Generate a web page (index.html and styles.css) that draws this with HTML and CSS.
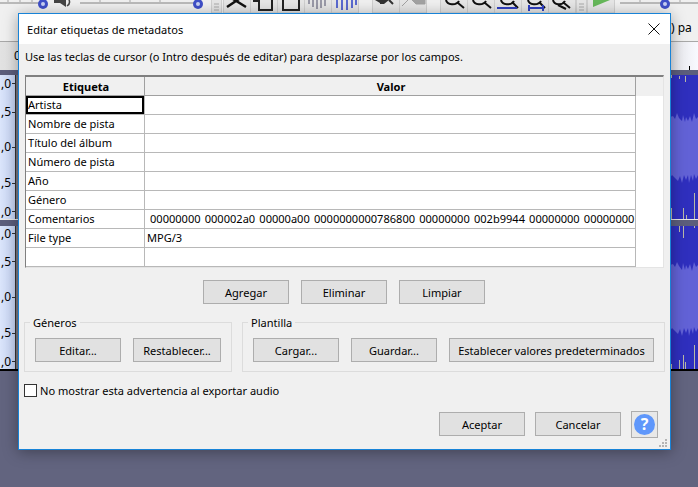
FILE: index.html
```html
<!DOCTYPE html>
<html lang="es">
<head>
  <meta charset="UTF-8" />
  <title>Editar etiquetas de metadatos</title>
  <link rel="stylesheet" href="styles.css">
</head>
<body>
  <!-- ventana de fondo -->
  <div class="app">
    <svg class="toolbar" width="698" height="14" viewBox="0 0 698 14">
      <rect width="698" height="14" fill="#f0f0f0"/>
      <path d="M0 3H43M80 3H198M620 3H698" stroke="#a8a8a8" stroke-width="1.5"/>
      <path d="M8 0V2M20 0V2M32 0V2M100 0V2M130 0V2M160 0V2M640 0V2M680 0V2" stroke="#a8a8a8"/>
      <g fill="#3f4fc8">
        <circle cx="43" cy="4" r="5"/><circle cx="198" cy="4" r="5"/><circle cx="665" cy="4" r="5"/>
      </g>
      <g fill="#c8d0f4">
        <circle cx="43" cy="4" r="2"/><circle cx="198" cy="4" r="2"/><circle cx="665" cy="4" r="2"/>
      </g>
      <path d="M54 0H66V7L60 3H54Z" fill="#444"/>
      <path d="M69 0C70 2 70 4 67 6" fill="none" stroke="#444" stroke-width="1.500"/>
      <g fill="#e6e6e6" stroke="#cfcfcf">
        <rect x="211.500" y="-2" width="10" height="15"/>
        <rect x="223.500" y="-2" width="27" height="15"/>
        <rect x="250.500" y="-2" width="27" height="15"/>
        <rect x="277.500" y="-2" width="27" height="15"/>
        <rect x="304.500" y="-2" width="27" height="15"/>
        <rect x="331.500" y="-2" width="27" height="15"/>
        <rect x="372.500" y="-2" width="27" height="15"/>
        <rect x="399.500" y="-2" width="27" height="15"/>
        <rect x="440.500" y="-2" width="27" height="15"/>
        <rect x="467.500" y="-2" width="27" height="15"/>
        <rect x="494.500" y="-2" width="27" height="15"/>
        <rect x="521.500" y="-2" width="27" height="15"/>
        <rect x="548.500" y="-2" width="27" height="15"/>
        <rect x="576.500" y="-2" width="10" height="15"/>
        <rect x="587.500" y="-2" width="27" height="15"/>
      </g>
      <path d="M214 4H219M214 7H219M214 10H219M579 4H584M579 7H584M579 10H584" stroke="#aaa"/>
      <path d="M233 -1L246 7M227 7L239 -1" fill="none" stroke="#111" stroke-width="2.500"/>
      <path d="M253 1H258M259 0V10H272V0M283 0V10H299V0" fill="none" stroke="#222" stroke-width="2"/>
      <path d="M309 0V4M313 0V7M317 0V9M321 0V8M325 0V6" stroke="#9a9aa8" stroke-width="2"/>
      <path d="M337 0V8M342 0V10M347 0V10M352 0V8M356 0V5" stroke="#5a6ad0" stroke-width="2"/>
      <path d="M375 0H389L384 4H380V3Z" fill="#333"/>
      <path d="M389 0L393 4" stroke="#333" stroke-width="2"/>
      <path d="M402 6L408 0M412 0H425V4H416Z" fill="#a2a2a2" stroke="#a2a2a2"/>
      <g fill="none" stroke="#111" stroke-width="2">
        <path d="M446 0C447 5 456 6 459 1M458 3L464 8"/>
        <path d="M473 0C474 5 483 6 486 1M485 3L491 8"/>
        <path d="M501 0C502 5 511 6 514 1M513 3L518 8"/>
        <path d="M528 0C529 5 538 6 541 1M540 3L545 8"/>
        <path d="M553 0C554 5 562 6 565 1M564 3L570 8M558 5L566 9"/>
      </g>
      <path d="M497 8H517M529 8H543M529 5V11M543 5V11" stroke="#3040c0" stroke-width="2"/>
      <path d="M593 0H610L593 7Z" fill="#66b85a"/>
    </svg>
    <div class="rate-row"><span class="rate">) pa</span></div>
    <div class="ruler">
      <span class="ruler-zero">0</span>
      <span class="ruler-tick"></span>
    </div>
    <div class="track">
      <div class="scale">
        <span>,0</span><span>,5</span><span>,0</span><span>,5</span><span>,0</span>
      </div>
      <div class="track-sep"></div>
      <div class="track-mid"></div>
      <svg class="wave" width="28" height="144" viewBox="0 0 28 144">
        <rect width="28" height="144" fill="#2f2fbe"/>
        <path d="M0 42L3 41L5 44L7 38L9 43L12 46L13 40L15 47L16 42L18 46L20 41L22 47L24 38L26 44L28 42V100L26 104L24 99L23 106L21 100L19 108L18 100L16 105L14 100L12 108L10 101L8 106L6 104L4 102L2 100L0 103Z" fill="#6262d6"/>
        <path d="M1.500 0V3M9.500 1V4M15.500 1V7M1.500 133V144M13.500 133V144M16.500 140V144M24.500 118V144" stroke="#b9b9a6"/>
      </svg>
    </div>
    <div class="track-gap"></div>
    <div class="track track-low">
      <div class="scale">
        <span>,0</span><span>,5</span><span>,0</span><span>,5</span><span>,0</span>
      </div>
      <div class="track-sep"></div>
      <div class="track-mid"></div>
      <svg class="wave" width="28" height="143" viewBox="0 0 28 143">
        <rect width="28" height="143" fill="#2f2fbe"/>
        <path d="M0 39L3 38L5 41L7 36L9 40L12 44L13 37L15 44L16 39L18 43L20 38L22 45L24 36L26 41L28 39V102L26 106L24 101L23 108L21 102L19 110L18 102L16 107L14 102L12 110L10 103L8 108L6 106L4 104L2 102L0 105Z" fill="#6262d6"/>
        <path d="M9.500 0V6M13.500 0V12M24.500 0V2M1.500 138V143M9.500 134V143M13.500 129V143M15.500 136V143M24.500 119V143" stroke="#b9b9a6"/>
      </svg>
    </div>
    <div class="track-end"></div>
  </div>

  <div class="dialog">
    <div class="title-bar">
      <span>Editar etiquetas de metadatos</span>
      <svg class="close-icon" width="12" height="12" viewBox="0 0 12 12">
        <path d="M0.500 0.500L11.500 11.500M11.500 0.500L0.500 11.500" stroke="#111" fill="none"/>
      </svg>
    </div>
    <p class="hint">Use las teclas de cursor (o Intro después de editar) para desplazarse por los campos.</p>

    <div class="grid-panel">
      <table class="tags">
        <thead>
          <tr><th class="col-tag">Etiqueta</th><th class="col-value">Valor</th></tr>
        </thead>
        <tbody>
          <tr><td class="selected">Artista</td><td></td></tr>
          <tr><td>Nombre de pista</td><td></td></tr>
          <tr><td>Título del álbum</td><td></td></tr>
          <tr><td>Número de pista</td><td></td></tr>
          <tr><td>Año</td><td></td></tr>
          <tr><td>Género</td><td></td></tr>
          <tr><td>Comentarios</td><td class="long">00000000 000002a0 00000a00 0000000000786800 00000000 002b9944 00000000 00000000 00000000</td></tr>
          <tr><td>File type</td><td>MPG/3</td></tr>
          <tr><td></td><td></td></tr>
        </tbody>
      </table>
    </div>

    <div class="row-actions">
      <button>Agregar</button>
      <button>Eliminar</button>
      <button>Limpiar</button>
    </div>

    <div class="groups">
      <fieldset class="group group-genres">
        <legend>Géneros</legend>
        <button>Editar...</button>
        <button class="btn-reset">Restablecer...</button>
      </fieldset>
      <fieldset class="group group-template">
        <legend>Plantilla</legend>
        <button>Cargar...</button>
        <button>Guardar...</button>
        <button class="btn-defaults">Establecer valores predeterminados</button>
      </fieldset>
    </div>

    <label class="check-row">
      <input type="checkbox" />
      <span>No mostrar esta advertencia al exportar audio</span>
    </label>

    <div class="footer">
      <button>Aceptar</button>
      <button>Cancelar</button>
      <button class="btn-help"><span class="help-dot">?</span></button>
    </div>

    <svg class="grip" width="9" height="9" viewBox="0 0 9 9">
      <path d="M6 0h2v2H6zM3 3h2v2H3zM6 3h2v2H6zM0 6h2v2H0zM3 6h2v2H3zM6 6h2v2H6z" fill="#b4b4b4"/>
    </svg>
  </div>
</body>
</html>
```

FILE: styles.css
```css
body {
  margin: 0;
  height: 487px;
  overflow: hidden;
  background: #62647f;
  font-family: "Noto Sans", sans-serif;
  font-size: 11.05px;
  color: #000;
}

/* ventana de fondo */
.app {
  height: 487px;
  overflow: hidden;
}

.toolbar {
  display: block;
}

.rate-row {
  height: 27px;
  background: #f0f0f0;
  border-bottom: 1px solid #a8a8a8;
  display: flex;
  justify-content: flex-end;
  align-items: center;
}

.rate {
  width: 27px;
  font-size: 12px;
}

.ruler {
  height: 28px;
  background: linear-gradient(90deg, #e2e2e2, #ffffff 50%, #e4e4e8 96%, #f8f9ff);
  display: flex;
  justify-content: space-between;
}

.ruler-zero {
  margin-left: 14px;
  margin-top: 5px;
  font-size: 12px;
}

.ruler-tick {
  width: 1px;
  height: 4px;
  background: #000;
  margin-top: 24px;
  margin-right: 8px;
}

.track {
  height: 149px;
  display: grid;
  grid-template-columns: 15px 3px 1fr 28px;
  grid-template-rows: 5px 144px;
  background: #5c5e7c;
}

.track-low {
  height: 143px;
  grid-template-rows: 143px;
}

.scale {
  grid-column: 1;
  grid-row: 2;
  display: grid;
  grid-template-rows: 17px 40px 30px 42px 15px;
  background: linear-gradient(90deg, #dbe5fb, #c5d3f2);
}

.track-low .scale {
  grid-template-rows: 15px 41px 30px 42px 15px;
}

.track-low .scale,
.track-low .track-sep,
.track-low .track-mid,
.track-low .wave {
  grid-row: 1;
}

.scale span {
  display: flex;
  align-items: center;
  font-size: 12px;
  line-height: 16px;
  height: 100%;
  padding-left: 1px;
}

.scale span::after {
  content: "";
  width: 3px;
  height: 1px;
  background: #333;
  margin-left: 1px;
}

.track-sep {
  grid-column: 2;
  grid-row: 2;
  background: #7b7880;
  border-left: 1px solid #333;
}

.track-mid {
  grid-column: 3;
  grid-row: 2;
}

.wave {
  grid-column: 4;
  grid-row: 2;
  display: block;
}

.track-gap {
  height: 7px;
  background: #5c5e7c;
  border-top: 1px solid #e8e8e8;
  box-sizing: border-box;
}

.track-end {
  height: 2px;
  background: #000;
}

/* dialogo */
.dialog {
  position: absolute;
  left: 18px;
  top: 13px;
  width: 653px;
  height: 437px;
  box-sizing: border-box;
  background: #f0f0f0;
  border: 1px solid #1883d7;
  box-shadow: 0 2px 14px rgba(0, 0, 0, 0.35);
}

.title-bar {
  height: 30px;
  background: #fff;
  display: flex;
  justify-content: space-between;
  align-items: center;
  padding: 0 10px 0 8px;
}

.close-icon {
  display: block;
}

.hint {
  margin: 0;
  height: 31px;
  padding: 5px 0 0 6px;
  box-sizing: border-box;
  line-height: 16px;
}

.grid-panel {
  margin-left: 6px;
  width: 639px;
  height: 193px;
  box-sizing: border-box;
  border-top: 2px solid #808080;
  border-left: 1px solid #808080;
  border-right: 1px solid #e4e4e4;
  border-bottom: 1px solid #e4e4e4;
  background: linear-gradient(#f0f0f0 19px, #fff 19px);
}

.tags {
  width: 610px;
  table-layout: fixed;
  border-collapse: separate;
  border-spacing: 0;
}

.tags th,
.tags td {
  height: 19px;
  box-sizing: border-box;
  padding: 0 0 0 2px;
  line-height: 18px;
  border-right: 1px solid #b8b8b8;
  border-bottom: 1px solid #b8b8b8;
  white-space: nowrap;
  overflow: hidden;
  text-align: left;
  font-weight: normal;
}

.tags th {
  padding-top: 1px;
  line-height: 17px;
  background: #f0f0f0;
  border-color: #a0a0a0;
  font-weight: bold;
  text-align: center;
}

.tags td {
  background: #fff;
}

.col-tag {
  width: 119px;
}

.col-value {
  width: 491px;
}

.tags td.selected {
  box-shadow: inset 0 0 0 2px #000;
}

.tags td.long {
  padding-left: 5px;
  word-spacing: 1.3px;
}

button {
  width: 86px;
  height: 24px;
  padding: 0;
  box-sizing: border-box;
  background: #e1e1e1;
  border: 1px solid #adadad;
  font-family: inherit;
  font-size: 11.05px;
  color: #000;
}

.row-actions {
  margin-top: 12px;
  padding-right: 1px;
  display: flex;
  justify-content: center;
  gap: 12px;
}

.groups {
  margin: 9px 0 0 5px;
  display: flex;
  gap: 10px;
}

.group {
  margin: 0;
  padding: 7px 10px 9px;
  min-width: 0;
  box-sizing: border-box;
  border: 1px solid #dcdcdc;
  display: flex;
  gap: 12px;
}

.group legend {
  margin-left: -5px;
  padding: 2px 3px 0;
  line-height: 16px;
}

.group-genres {
  width: 208px;
}

.group-template {
  width: 423px;
}

.btn-reset {
  width: 88px;
}

.btn-defaults {
  width: 205px;
}

.check-row {
  margin: 12px 0 0 5px;
  height: 13px;
  display: flex;
  align-items: center;
  gap: 3px;
}

.check-row input {
  appearance: none;
  margin: 0;
  width: 13px;
  height: 13px;
  background: #fff;
  border: 1px solid #333;
}

.footer {
  margin-top: 14px;
  padding-right: 12px;
  display: flex;
  justify-content: flex-end;
  align-items: flex-start;
  gap: 10px;
}

.footer button {
  margin-top: 1px;
}

.footer .btn-help {
  margin-top: 0;
  width: 27px;
  height: 27px;
  display: flex;
  align-items: center;
  justify-content: center;
  background: #e8e8e8;
}

.help-dot {
  width: 21px;
  height: 21px;
  border-radius: 50%;
  background: #5f97fb;
  color: #fff;
  font-size: 16px;
  font-weight: bold;
  line-height: 21px;
  text-align: center;
}

.grip {
  position: absolute;
  right: 2px;
  bottom: 1px;
}
```
